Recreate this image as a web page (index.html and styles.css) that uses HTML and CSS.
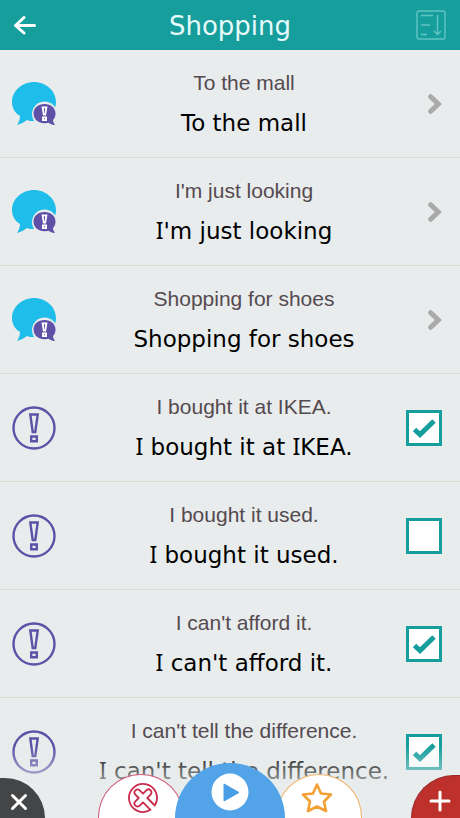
FILE: index.html
```html
<!DOCTYPE html>
<html lang="en">
<head>
<meta charset="utf-8">
<meta name="viewport" content="width=device-width, initial-scale=1">
<title>Shopping</title>
<link rel="stylesheet" href="styles.css">
</head>
<body>
<svg class="defs" aria-hidden="true">
  <symbol id="chat" viewBox="0 0 44 44">
    <path fill="#1ebdea" d="M22 0C34 0 44 9 44 20S34 39 22 39c-3 0-5 0-7-1-3 2-6 4-10 5 2-3 3-6 3-9C3 31 0 26 0 20 0 9 10 0 22 0z"/>
    <circle cx="32.500" cy="32" r="12.500" fill="#e8ecec"/>
    <path fill="#5f50a8" d="M32.500 22C39 22 43.500 26 43.500 31.500c0 3-1 5-2.500 6.500 0 2 1 3.500 2 5-3 0-5-1-6.500-2.200-1.500.4-2.500.4-4 .4C26 41.200 21.500 37 21.500 31.500S26 22 32.500 22z"/>
    <path fill="#fff" d="M29.500 24.500h6l-1.500 9h-3zM30 34.500h5v4.500h-5z"/>
    <path fill="#5f50a8" d="M31.800 26.300h1.400l-.5 5h-.4zM32 36.200h1v1h-1z"/>
  </symbol>
  <symbol id="phrase" viewBox="0 0 44 44">
    <g fill="none" stroke="#5f50a8" stroke-width="2.400">
      <circle cx="22" cy="22" r="20.500"/>
      <path d="M18.300 8.500h7.400L23.300 26h-2.600zM19.200 30.500h5.600v4.800h-5.600z"/>
    </g>
  </symbol>
  <symbol id="chevron" viewBox="0 0 14 20">
    <path d="M2.700 2.700L10.300 10l-7.600 7.300" fill="none" stroke="#a9a9a9" stroke-width="5" stroke-linecap="round" stroke-linejoin="miter"/>
  </symbol>
</svg>

<header class="bar">
  <button class="bar-button" type="button" aria-label="Back">
    <svg width="24" height="20" viewBox="0 0 24 20" fill="none" stroke="#fff" stroke-width="3" stroke-linecap="round" stroke-linejoin="round"><path d="M12 2.500L3.500 10.500l8.500 7.500M3.500 10.500h19"/></svg>
  </button>
  <h1 class="bar-title">Shopping</h1>
  <button class="bar-button bar-button-end" type="button" aria-label="Sort">
    <svg width="30" height="30" viewBox="0 0 30 30" fill="none" stroke="#62c5c2" stroke-width="1.400"><rect x="1" y="1" width="28" height="28" rx="2"/><path d="M5 5.500h12M5 15h9M5 24.500h6M21.500 5v19M18 21l3.500 3.500L25 21"/></svg>
  </button>
</header>

<main>
<ul class="list">
  <li class="row">
    <svg class="row-icon"><use href="#chat"/></svg>
    <a class="row-text" href="#mall"><span class="source">To the mall</span><span class="target">To the mall</span></a>
    <svg class="chevron"><use href="#chevron"/></svg>
  </li>
  <li class="row">
    <svg class="row-icon"><use href="#chat"/></svg>
    <a class="row-text" href="#looking"><span class="source">I'm just looking</span><span class="target"><span class="cap">I</span>'m just looking</span></a>
    <svg class="chevron"><use href="#chevron"/></svg>
  </li>
  <li class="row">
    <svg class="row-icon"><use href="#chat"/></svg>
    <a class="row-text" href="#shoes"><span class="source">Shopping for shoes</span><span class="target">Shopping for shoes</span></a>
    <svg class="chevron"><use href="#chevron"/></svg>
  </li>
  <li class="row">
    <svg class="row-icon"><use href="#phrase"/></svg>
    <label class="row-text" for="ikea"><span class="source">I bought it at IKEA.</span><span class="target"><span class="cap">I</span> bought it at <span class="cap">I</span>KEA.</span></label>
    <span class="check"><input id="ikea" type="checkbox" checked><svg viewBox="0 0 36 36"><path d="M8.500 19.500l5.500 5L28 11"/></svg></span>
  </li>
  <li class="row">
    <svg class="row-icon"><use href="#phrase"/></svg>
    <label class="row-text" for="used"><span class="source">I bought it used.</span><span class="target"><span class="cap">I</span> bought it used.</span></label>
    <span class="check"><input id="used" type="checkbox"><svg viewBox="0 0 36 36"><path d="M8.500 19.500l5.500 5L28 11"/></svg></span>
  </li>
  <li class="row">
    <svg class="row-icon"><use href="#phrase"/></svg>
    <label class="row-text" for="afford"><span class="source">I can't afford it.</span><span class="target"><span class="cap">I</span> can't afford it.</span></label>
    <span class="check"><input id="afford" type="checkbox" checked><svg viewBox="0 0 36 36"><path d="M8.500 19.500l5.500 5L28 11"/></svg></span>
  </li>
  <li class="row">
    <svg class="row-icon"><use href="#phrase"/></svg>
    <label class="row-text" for="difference"><span class="source">I can't tell the difference.</span><span class="target"><span class="cap">I</span> can't tell the difference.</span></label>
    <span class="check"><input id="difference" type="checkbox" checked><svg viewBox="0 0 36 36"><path d="M8.500 19.500l5.500 5L28 11"/></svg></span>
  </li>
</ul>
</main>

<nav class="dock" aria-label="Actions">
  <button class="tab tab-close" type="button" aria-label="Close">
    <svg width="18" height="18" viewBox="0 0 18 18" fill="none" stroke="#fff" stroke-width="3" stroke-linecap="round"><path d="M2.500 2.500l13 13M15.500 2.500l-13 13"/></svg>
  </button>
  <div class="dock-center">
    <button class="tab tab-wrong" type="button" aria-label="Incorrect">
      <svg width="32" height="32" viewBox="0 0 32 32" fill="none" stroke="#c92b4c" stroke-width="1.800" stroke-linejoin="round" stroke-linecap="round"><path d="M23.500 27.800A14 14 0 1 1 27.800 23.500L20.300 16l3.300-3.300a3 3 0 0 0-4.300-4.300L16 11.700l-3.300-3.300a3 3 0 0 0-4.300 4.300l3.300 3.300-3.300 3.300a3 3 0 0 0 4.300 4.300l3.300-3.300z"/></svg>
    </button>
    <button class="tab tab-play" type="button" aria-label="Play">
      <svg width="38" height="38" viewBox="0 0 38 38"><circle cx="19" cy="19" r="18.500" fill="#fff"/><path d="M13 11l15 8.500L13 28z" fill="#4a9ee6" stroke="#4a9ee6" stroke-linejoin="round"/></svg>
    </button>
    <button class="tab tab-star" type="button" aria-label="Favourite">
      <svg width="32" height="32" viewBox="0 0 32 32" fill="none" stroke="#f2a033" stroke-width="2.600" stroke-linejoin="round"><path d="M16 2.500l4 9 10 1-7 7 2 9.500-9-4.500-9 4.500 2-9.500-7-7 10-1z"/></svg>
    </button>
  </div>
  <button class="tab tab-add" type="button" aria-label="Add">
    <svg width="22" height="22" viewBox="0 0 22 22" fill="none" stroke="#fff" stroke-width="3" stroke-linecap="round"><path d="M11 2v18M2 11h18"/></svg>
  </button>
</nav>
</body>
</html>
```
FILE: styles.css
```css
* { box-sizing: border-box; }

body {
  margin: 0;
  height: 100vh;
  overflow: hidden;
  display: flex;
  flex-direction: column;
  background: #e8ecec;
  color: #000;
  font-family: "Liberation Sans", Arial, sans-serif;
}

button {
  border: 0;
  padding: 0;
  background: none;
  cursor: pointer;
}

svg { display: block; }

.defs { position: absolute; width: 0; height: 0; }

.bar {
  flex: none;
  display: grid;
  grid-template-columns: 48px 1fr 48px;
  align-items: center;
  height: 50px;
  padding: 0 12px;
  background: #169e9d;
}

.bar-button { justify-self: start; }
.bar-button-end { justify-self: end; margin-right: 2px; }

.bar-title {
  margin: 0;
  padding-top: 2px;
  text-align: center;
  font: 26px/30px "DejaVu Sans", Verdana, sans-serif;
  color: #e6fafa;
}

main {
  flex: 1;
  min-height: 0;
  overflow: hidden;
}

.list {
  margin: 0;
  padding: 0;
  list-style: none;
}

.row {
  display: grid;
  grid-template-columns: 78px 1fr 44px;
  align-items: center;
  height: 108px;
  padding: 0 18px 0 12px;
  border-bottom: 1px solid #d9dccf;
}

.row-icon { width: 44px; height: 44px; }

.row-text {
  display: flex;
  flex-direction: column;
  gap: 12px;
  text-align: center;
  text-decoration: none;
  white-space: nowrap;
  color: #000;
}

.source {
  font-size: 21px;
  line-height: 26px;
  color: #554a50;
}

.target { font: 23px/30px "DejaVu Sans", Verdana, sans-serif; }

.cap { font-family: "Noto Sans", Verdana, sans-serif; line-height: 1; }

.chevron {
  justify-self: end;
  width: 14px;
  height: 20px;
}

.check {
  display: grid;
  justify-self: end;
}

.check > * {
  grid-area: 1 / 1;
  width: 36px;
  height: 36px;
}

.check input {
  appearance: none;
  margin: 0;
  border: 3px solid #169e9d;
  background: #fff;
}

.check svg {
  visibility: hidden;
  pointer-events: none;
  fill: none;
  stroke: #169e9d;
  stroke-width: 5px;
}

.check input:checked + svg { visibility: visible; }

.dock {
  position: fixed;
  inset: auto 0 0;
  display: flex;
  align-items: flex-end;
  justify-content: space-between;
  height: 72px;
  overflow: hidden;
  background: linear-gradient(#e8ecec00, #e8ecec 56px);
}

.dock-center {
  position: absolute;
  inset: auto 0 0;
  display: flex;
  align-items: flex-end;
  justify-content: center;
}

.tab {
  display: grid;
  place-items: center;
}

.tab-close {
  z-index: 1;
  width: 45px;
  height: 40px;
  padding: 8px 8px 0 0;
  border-radius: 0 42px 0 0;
  background: #444546;
}

.tab-add {
  z-index: 1;
  width: 49px;
  height: 43px;
  padding: 8px 0 0 8px;
  border: 1px solid #98282a;
  border-width: 1px 0 0 1px;
  border-radius: 46px 0 0 0;
  background: #bd302c;
}

.tab-wrong,
.tab-star {
  width: 86px;
  height: 44px;
  padding-top: 2px;
  border: 1px solid #cf5b76;
  border-bottom: 0;
  border-radius: 43px 43px 0 0;
  background: #fff;
}

.tab-wrong { padding-left: 4px; }

.tab-star {
  padding-right: 4px;
  border-color: #f2b366;
}

.tab-play {
  z-index: 1;
  width: 110px;
  height: 55px;
  margin: 0 -9px;
  padding-top: 2px;
  border-radius: 55px 55px 0 0;
  background: #52a3e7;
}
```
